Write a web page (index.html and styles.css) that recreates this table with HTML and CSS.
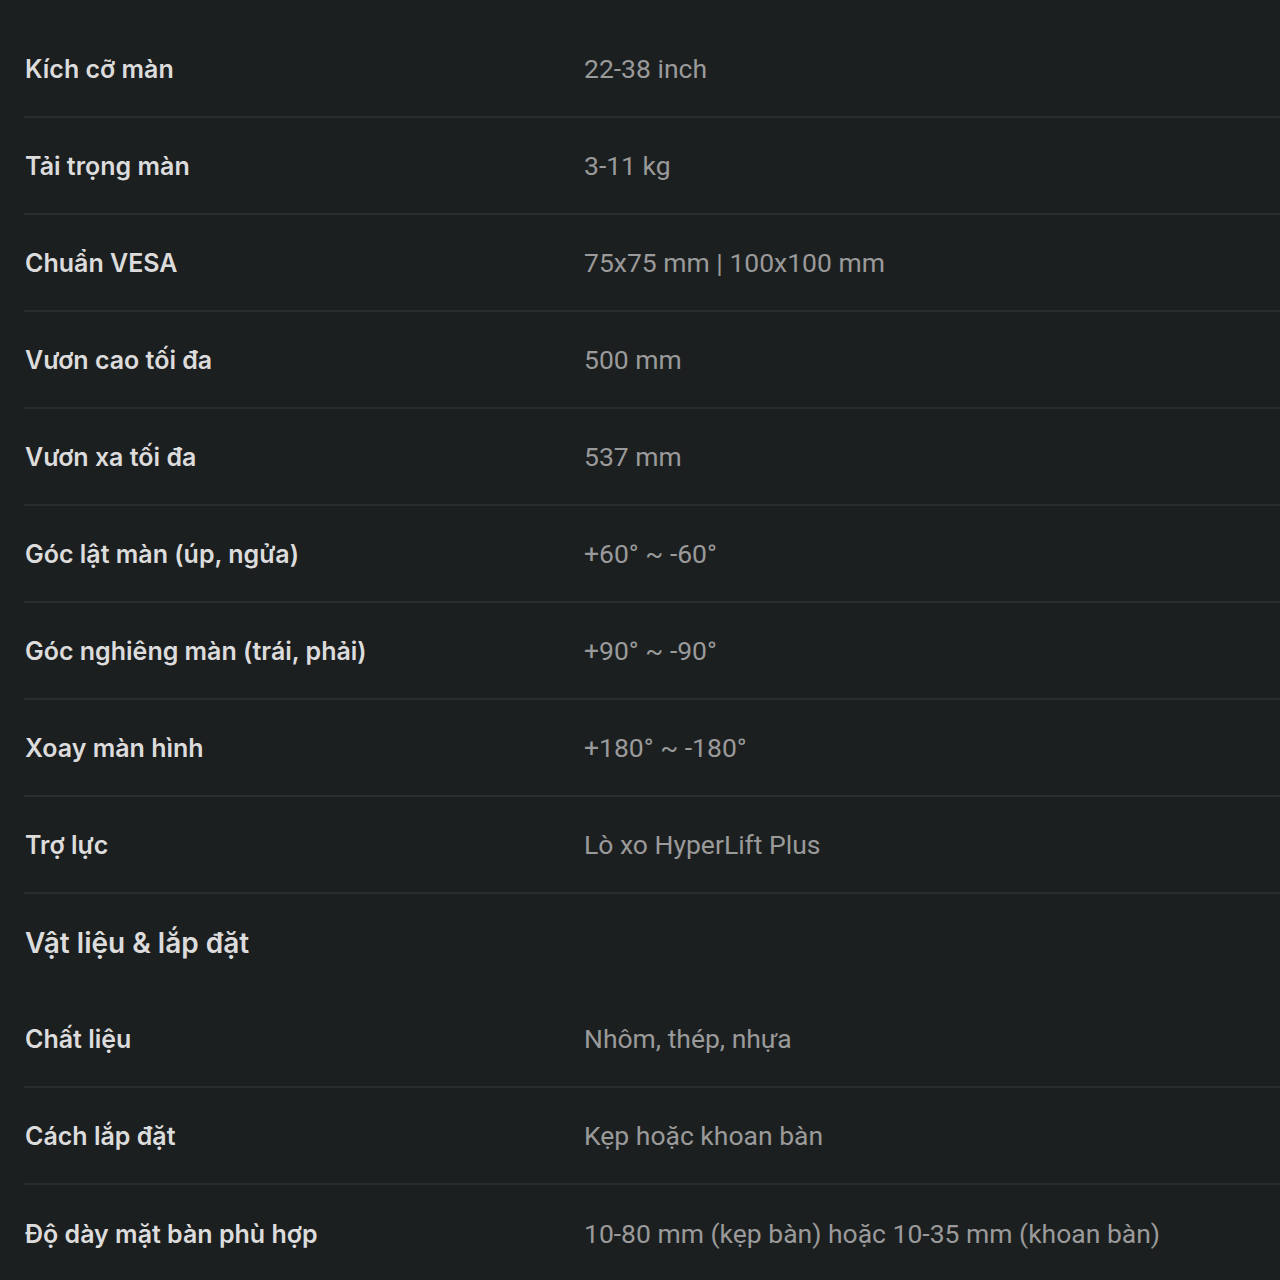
FILE: index.html
```html
<!DOCTYPE html>
<html lang="vi">
  <head>
    <meta charset="UTF-8" />
    <title>Thông số kỹ thuật</title>
    <link rel="stylesheet" href="styles.css">
  </head>
  <body>
    <div class="specs">
      <div class="row"><div class="label">Kích cỡ màn</div><div class="value">22-38 inch</div></div>
      <div class="row"><div class="label">Tải trọng màn</div><div class="value">3-11 kg</div></div>
      <div class="row"><div class="label">Chuẩn VESA</div><div class="value">75x75 mm | 100x100 mm</div></div>
      <div class="row"><div class="label">Vươn cao tối đa</div><div class="value">500 mm</div></div>
      <div class="row"><div class="label">Vươn xa tối đa</div><div class="value">537 mm</div></div>
      <div class="row"><div class="label">Góc lật màn (úp, ngửa)</div><div class="value">+60° ~ -60°</div></div>
      <div class="row"><div class="label">Góc nghiêng màn (trái, phải)</div><div class="value">+90° ~ -90°</div></div>
      <div class="row"><div class="label">Xoay màn hình</div><div class="value">+180° ~ -180°</div></div>
      <div class="row"><div class="label">Trợ lực</div><div class="value">Lò xo HyperLift Plus</div></div>
      <div class="group">Vật liệu &amp; lắp đặt</div>
      <div class="row"><div class="label">Chất liệu</div><div class="value">Nhôm, thép, nhựa</div></div>
      <div class="row"><div class="label">Cách lắp đặt</div><div class="value">Kẹp hoặc khoan bàn</div></div>
      <div class="row last"><div class="label">Độ dày mặt bàn phù hợp</div><div class="value">10-80 mm (kẹp bàn) hoặc 10-35 mm (khoan bàn)</div></div>
    </div>
  </body>
</html>
```

FILE: styles.css
```css
* {
  margin: 0px;
  padding: 0px;
  box-sizing: border-box;
}
body {
  background-color: #1c1f20;
  font-family: "Inter", "Noto Sans", sans-serif;
}
.specs {
  padding: 21px 0px 0px 24px;
}
.row {
  display: grid;
  grid-template-columns: 560px 1fr;
  align-items: center;
  height: 97px;
  border-bottom: 2px solid #2a2d2e;
}
.row.last {
  border-bottom: none;
}
.label {
  padding-left: 1px;
  font-size: 25px;
  font-weight: 600;
  color: #dcdcdc;
}
.value {
  font-family: "Roboto", sans-serif;
  font-size: 26.5px;
  color: #9a9a9a;
}
.group {
  display: flex;
  align-items: center;
  height: 97px;
  padding-left: 1px;
  font-size: 28px;
  font-weight: 600;
  color: #dcdcdc;
}
```
